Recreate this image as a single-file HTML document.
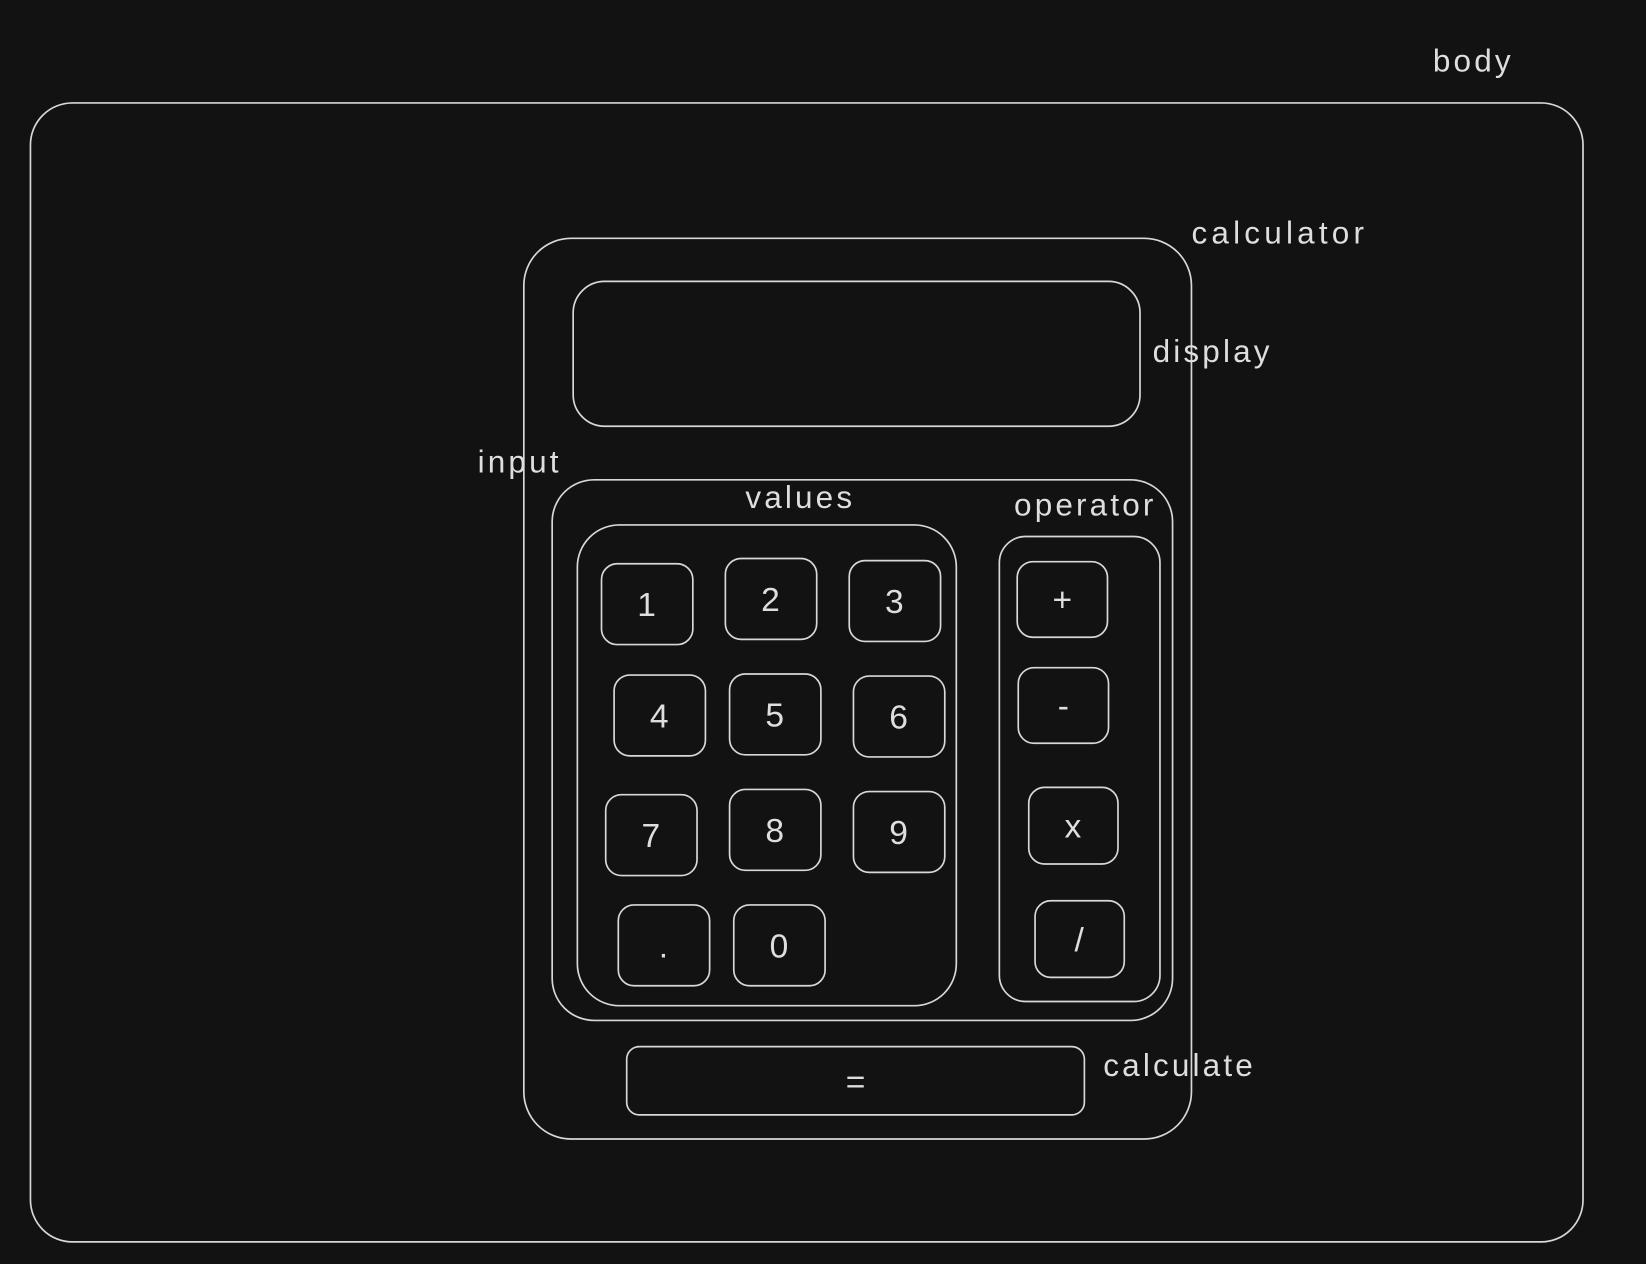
<!DOCTYPE html>
<html><head><meta charset="utf-8"><style>
html,body{margin:0;padding:0;background:#121212;width:1646px;height:1264px;overflow:hidden}
svg{display:block}
text{font-family:"Liberation Sans",sans-serif;fill:#dedede}
</style></head><body>
<svg width="1646" height="1264" viewBox="0 0 1568 1204" xmlns="http://www.w3.org/2000/svg">
<rect width="1568" height="1204" fill="#121212"/>
<g fill="none" stroke="#d8d8d8" stroke-width="1.6">
<rect x="29" y="98" width="1479" height="1085" rx="40"/>
<rect x="499" y="227" width="636" height="858" rx="45"/>
<rect x="546" y="268" width="540" height="138" rx="30"/>
<rect x="526" y="457" width="591" height="515" rx="40"/>
<rect x="550" y="500" width="361" height="458" rx="40"/>
<rect x="952" y="511" width="153" height="443" rx="25"/>
<rect x="573" y="537" width="87" height="77" rx="15"/>
<rect x="691" y="532" width="87" height="77" rx="15"/>
<rect x="809" y="534" width="87" height="77" rx="15"/>
<rect x="585" y="643" width="87" height="77" rx="15"/>
<rect x="695" y="642" width="87" height="77" rx="15"/>
<rect x="813" y="644" width="87" height="77" rx="15"/>
<rect x="577" y="757" width="87" height="77" rx="15"/>
<rect x="695" y="752" width="87" height="77" rx="15"/>
<rect x="813" y="754" width="87" height="77" rx="15"/>
<rect x="589" y="862" width="87" height="77" rx="15"/>
<rect x="699" y="862" width="87" height="77" rx="15"/>
<rect x="969" y="535" width="86" height="72" rx="15"/>
<rect x="970" y="636" width="86" height="72" rx="15"/>
<rect x="980" y="750" width="85" height="73" rx="15"/>
<rect x="986" y="858" width="85" height="73" rx="15"/>
<rect x="597" y="997" width="436" height="65" rx="12"/>
</g>
<g font-size="30" letter-spacing="3">
<text x="1365" y="68">body</text>
<text x="1135" y="232" letter-spacing="4">calculator</text>
<text x="1098" y="345">display</text>
<text x="455" y="450">input</text>
<text x="710" y="484">values</text>
<text x="966" y="491">operator</text>
<text x="1051" y="1025">calculate</text>
</g>
<g font-size="32" text-anchor="middle">
<text x="616" y="587">1</text>
<text x="734" y="582">2</text>
<text x="852" y="584">3</text>
<text x="628" y="693">4</text>
<text x="738" y="692">5</text>
<text x="856" y="694">6</text>
<text x="620" y="807">7</text>
<text x="738" y="802">8</text>
<text x="856" y="804">9</text>
<text x="632" y="912">.</text>
<text x="742" y="912">0</text>
<text x="1012" y="582">+</text>
<text x="1013" y="683">-</text>
<text x="1022" y="798">x</text>
<text x="1028" y="906">/</text>
<text x="815" y="1041">=</text>
</g>
</svg>
</body></html>
